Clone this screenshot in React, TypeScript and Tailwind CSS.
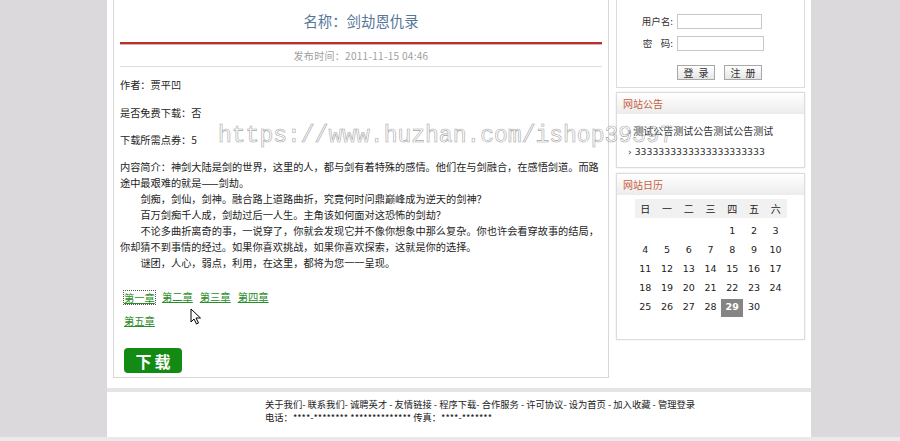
import React from "react";

const cjk = "font-['Noto_Sans_CJK_SC','Liberation_Sans',sans-serif]";

function Calendar() {
  const week = ["日", "一", "二", "三", "四", "五", "六"];
  const cells: (number | null)[] = [null, null, null, null];
  for (let i = 1; i <= 30; i++) cells.push(i);
  while (cells.length < 35) cells.push(null);
  return (
    <div className="mx-auto w-[152px] mt-[4px]">
      <div className="grid grid-cols-7 h-[19px] bg-[#f1f1f1] text-[10px] text-[#222] items-center text-center">
        {week.map((w) => (
          <div key={w}>{w}</div>
        ))}
      </div>
      <div className="grid grid-cols-7 mt-[4px] text-[9.5px] text-[#222] font-['DejaVu_Sans',sans-serif] text-center">
        {cells.map((c, i) => (
          <div key={i} className="h-[19px] flex items-center justify-center">
            {c === 29 ? (
              <div className="w-full h-[18px] bg-[#858585] text-white font-bold flex items-center justify-center">29</div>
            ) : (
              c ?? ""
            )}
          </div>
        ))}
      </div>
    </div>
  );
}

export default function App() {
  return (
    <div className={`relative w-[900px] h-[441px] bg-[#dcd9dc] flex flex-col overflow-hidden ${cjk}`}>
      <div className="flex-1 flex pl-[107px]">
        <div className="w-[704px] flex flex-col">
          <div className="bg-white h-[388px] flex px-[6px] gap-[7px]">
            {/* main column */}
            <div className="w-[496px] h-[378px] border-x border-b border-[#d8d8d8] px-[6px] flex flex-col">
              <div className="h-[42px] flex items-center justify-center text-[14.4px] text-[#56779a]">
                名称：剑劫恩仇录
              </div>
              <div className="h-[2px] bg-[#b8312f] shadow-[0_1px_0_#d9b0b0]" />
              <div className="h-[22px] flex items-center justify-center text-[10px] text-[#a0a0a0] tracking-[0.3px]">
                发布时间：2011-11-15 04:46
              </div>
              <div className="h-px bg-[#dedede]" />
              <div className="text-[10.2px] leading-[16px] text-[#1e1e1e]">
                <p className="mt-[10px]">作者：贾平凹</p>
                <p className="mt-[12px]">是否免费下载：否</p>
                <p className="mt-[11px]">下载所需点券：5</p>
                <div className="mt-[11px]">
                  <p>内容简介：神剑大陆是剑的世界，这里的人，都与剑有着特殊的感情。他们在与剑融合，在感悟剑道。而路途中最艰难的就是——剑劫。</p>
                  <p className="indent-[2em]">剑痴，剑仙，剑神。融合路上道路曲折，究竟何时问鼎巅峰成为逆天的剑神？</p>
                  <p className="indent-[2em]">百万剑痴千人成，剑劫过后一人生。主角该如何面对这恐怖的剑劫？</p>
                  <p className="indent-[2em]">不论多曲折离奇的事，一说穿了，你就会发现它并不像你想象中那么复杂。你也许会看穿故事的结局，你却猜不到事情的经过。如果你喜欢挑战，如果你喜欢探索，这就是你的选择。</p>
                  <p className="indent-[2em]">谜团，人心，弱点，利用，在这里，都将为您一一呈现。</p>
                </div>
              </div>
              <div className="mt-[14px] pl-[4px] text-[10.3px] text-[#2c8c2c]">
                <div className="h-[24px] flex items-center gap-[7px]">
                  <span className="underline outline outline-1 outline-dotted outline-[#555] leading-[13px]">第一章</span>
                  <span className="underline">第二章</span>
                  <span className="underline">第三章</span>
                  <span className="underline">第四章</span>
                </div>
                <div className="h-[24px] flex items-center">
                  <span className="underline">第五章</span>
                </div>
              </div>
              <div className="mt-[15px] pl-[4px]">
                <div className="w-[58px] h-[25px] rounded-[4px] bg-[#138a13] text-white text-[16px] font-bold tracking-[3px] pl-[3px] flex items-center justify-center">
                  下载
                </div>
              </div>
            </div>

            {/* sidebar */}
            <div className="w-[189px] flex flex-col">
              <div className="h-[88px] border-x border-b border-[#dcdcdc] pt-[14px] text-[9.5px] text-[#333]">
                <div className="flex items-center h-[15px]">
                  <div className="w-[56px] text-right">用户名:</div>
                  <div className="ml-[4px] w-[85px] h-[15px] border border-[#c8c8c8] bg-white" />
                </div>
                <div className="flex items-center h-[15px] mt-[7px]">
                  <div className="w-[56px] text-right">密&nbsp;&nbsp;&nbsp;&nbsp;码:</div>
                  <div className="ml-[4px] w-[87px] h-[15px] border border-[#c8c8c8] bg-white" />
                </div>
                <div className="flex mt-[14px] pl-[60px] gap-[9px]">
                  <div className="w-[38px] h-[15px] border border-[#a8a8a8] bg-gradient-to-b from-white to-[#e6e6e6] flex items-center justify-center text-[10px] tracking-[5px] pl-[5px]">登录</div>
                  <div className="w-[38px] h-[15px] border border-[#a8a8a8] bg-gradient-to-b from-white to-[#e6e6e6] flex items-center justify-center text-[10px] tracking-[5px] pl-[5px]">注册</div>
                </div>
              </div>

              <div className="mt-[4px] h-[76px] border border-[#dcdcdc] shadow-[0_0_2px_#e6e6e6]">
                <div className="h-[21px] bg-gradient-to-b from-white to-[#ececec] pl-[6px] flex items-center text-[10px] text-[#c5603c]">
                  网站公告
                </div>
                <div className="pt-[6px] pl-[11px] text-[10px] leading-[21px] text-[#333]">
                  <div>›&nbsp;测试公告测试公告测试公告测试</div>
                  <div className="font-['DejaVu_Sans',sans-serif] text-[9.3px]">›&nbsp;3333333333333333333333</div>
                </div>
              </div>

              <div className="mt-[5px] h-[167px] border border-[#dcdcdc] shadow-[0_0_2px_#e6e6e6]">
                <div className="h-[21px] bg-gradient-to-b from-white to-[#ececec] pl-[6px] flex items-center text-[10px] text-[#c5603c]">
                  网站日历
                </div>
                <Calendar />
              </div>
            </div>
          </div>
          <div className="h-[4px] bg-[#e6e5e6]" />
          <div className="bg-white h-[45px] pt-[6px] pl-[158px] text-[9.3px] leading-[12.5px] text-[#222]">
            <div>关于我们- 联系我们- 诚聘英才 - 友情链接 - 程序下载- 合作服务 - 许可协议- 设为首页 - 加入收藏 - 管理登录</div>
            <div>电话：****-******** ************** 传真：****-*******</div>
          </div>
        </div>
      </div>
      <div className="h-[4px] bg-[#ebe9eb]" />

      {/* watermark overlay */}
      <div className="absolute left-[218px] top-[125px] font-['Liberation_Mono',monospace] text-[23px] leading-[23px] text-transparent whitespace-nowrap [-webkit-text-stroke:0.6px_#a8a8a8] pointer-events-none">
        https://www.huzhan.com/ishop39397
      </div>

      {/* mouse cursor */}
      <svg className="absolute left-[190px] top-[308px]" width="12" height="17" viewBox="0 0 12 17">
        <path d="M1 1 L1 14 L4 11 L6.5 16 L8.5 15 L6 10 L10.5 10 Z" fill="white" stroke="black" strokeWidth="1" strokeLinejoin="round" />
      </svg>
    </div>
  );
}
